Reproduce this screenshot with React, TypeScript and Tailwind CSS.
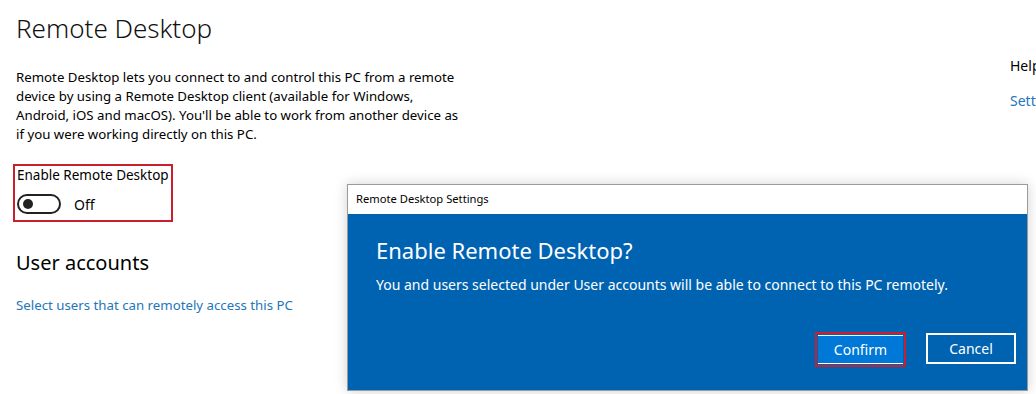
const intro = [
  "Remote Desktop lets you connect to and control this PC from a remote",
  "device by using a Remote Desktop client (available for Windows,",
  "Android, iOS and macOS). You'll be able to work from another device as",
  "if you were working directly on this PC.",
];

export default function App() {
  return (
    <div className="relative h-[394px] w-[1036px] overflow-hidden bg-white font-['Noto_Sans',sans-serif] text-black">
      <div className="flex">
        <div className="w-[1010px] shrink-0 pl-4">
          <h1 className="pt-[8px] text-[26px] font-light leading-[40px] text-[#111]">Remote Desktop</h1>
          <p className="mt-[20px] whitespace-nowrap text-[13.25px] leading-[19px]">
            {intro.map((line) => (
              <span key={line} className="block">
                {line}
              </span>
            ))}
          </p>
          <div className="-ml-[3px] mt-[20px] w-[160px] whitespace-nowrap border-2 border-[#c8202f] px-[2px] pb-[6px] pt-0">
            <div className="text-[13.5px] leading-[19px]">Enable Remote Desktop</div>
            <div className="mt-[9px] flex items-center gap-[13px]">
              <div className="flex h-[20px] w-[44px] items-center rounded-full border-2 border-[#222] pl-[4px]">
                <div className="h-[10px] w-[10px] rounded-full bg-[#222]" />
              </div>
              <span className="text-[14px] leading-[19px]">Off</span>
            </div>
          </div>
          <h2 className="mt-[27px] text-[20px] leading-[28px]">User accounts</h2>
          <a className="mt-[19px] block text-[13.25px] leading-[19px] text-[#2376b8]">
            Select users that can remotely access this PC
          </a>
        </div>
        <div className="w-[26px] shrink-0 whitespace-nowrap pt-[56px] text-[14px] leading-[19px] text-black">
          <div>Help</div>
          <div className="mt-[16px] text-[#2376b8]">Settings</div>
        </div>
      </div>

      <div className="absolute left-[347px] top-[184px] h-[207px] w-[681px] border border-[#9a9a9a] bg-white shadow-[0_0_12px_rgba(0,0,0,0.18)]">
        <div className="flex h-[29px] items-center pl-[8px] text-[11.2px] text-black">Remote Desktop Settings</div>
        <div className="flex h-[176px] flex-col bg-[#0063b1] pl-[28px] pr-[11px] text-white">
          <div className="mt-[20px] text-[22px] leading-[32px]">Enable Remote Desktop?</div>
          <div className="mt-[9px] text-[14px] leading-[19px]">
            You and users selected under User accounts will be able to connect to this PC remotely.
          </div>
          <div className="mb-[23px] mt-auto flex justify-end gap-[20px]">
            <div className="border-2 border-[#c8202f] p-[1px]">
              <button className="h-[29px] w-[85px] border-y border-white bg-[#0078d7] text-[14px] text-white">Confirm</button>
            </div>
            <button className="mt-[1px] h-[31px] w-[90px] border-2 border-white bg-[#0063b1] text-[14px] text-white">
              Cancel
            </button>
          </div>
        </div>
      </div>
    </div>
  );
}
